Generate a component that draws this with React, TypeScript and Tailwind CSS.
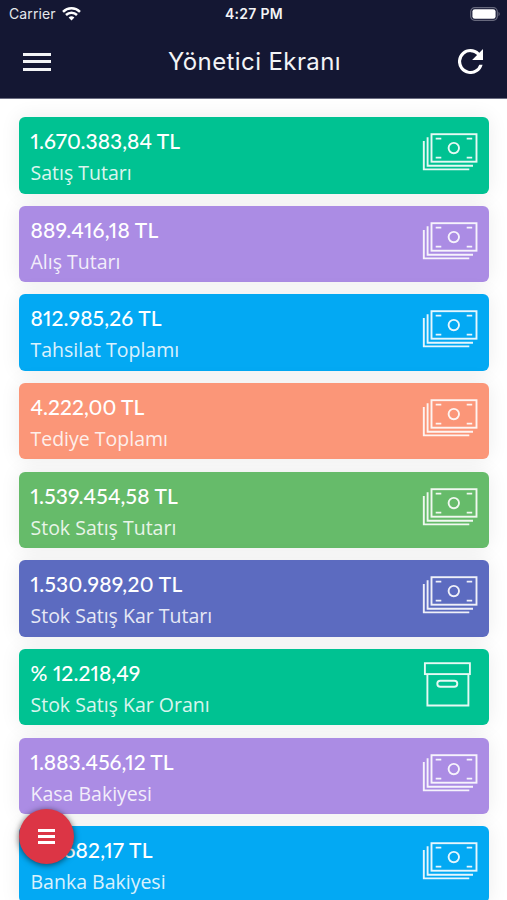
import React from 'react';

type Item = {
    value: string;
    label: string;
    color: string;
    tracking: string;
    icon?: 'money' | 'box';
};

const items: Item[] = [
    { value: '1.670.383,84 TL', label: 'Satış Tutarı', color: 'bg-[#00c292]', tracking: 'tracking-[0.03px]' },
    { value: '889.416,18 TL', label: 'Alış Tutarı', color: 'bg-[#ab8ce4]', tracking: 'tracking-[0.22px]' },
    { value: '812.985,26 TL', label: 'Tahsilat Toplamı', color: 'bg-[#03a9f3]', tracking: 'tracking-[0.15px]' },
    { value: '4.222,00 TL', label: 'Tediye Toplamı', color: 'bg-[#fb9678]', tracking: 'tracking-[0.03px]' },
    { value: '1.539.454,58 TL', label: 'Stok Satış Tutarı', color: 'bg-[#66bb6a]', tracking: 'tracking-[0.15px]' },
    { value: '1.530.989,20 TL', label: 'Stok Satış Kar Tutarı', color: 'bg-[#5c6bc0]', tracking: 'tracking-[0.27px]' },
    { value: '% 12.218,49', label: 'Stok Satış Kar Oranı', color: 'bg-[#00c292]', tracking: 'tracking-[0.08px]', icon: 'box' },
    { value: '1.883.456,12 TL', label: 'Kasa Bakiyesi', color: 'bg-[#ab8ce4]', tracking: 'tracking-[0px]' },
    { value: '119.682,17 TL', label: 'Banka Bakiyesi', color: 'bg-[#03a9f3]', tracking: 'tracking-[0.2px]' },
];

const MoneyIcon = () => (
    <svg className="h-12 w-14" viewBox="0 0 56 48" fill="none" stroke="currentColor" strokeWidth="1.9">
        <rect x="9.5" y="6.2" width="45" height="27.5" />
        <path d="M5.6 9.3V37.7H51" />
        <path d="M1.8 13v28.4h45.5" />
        <circle cx="31.8" cy="20.1" r="5.2" />
        <path d="M13.7 10.6h5.6M44.7 10.6h5.5M13.7 29.6h5.6M44.7 29.6h5.5" />
    </svg>
);

const BoxIcon = () => (
    <svg className="h-12 w-14" viewBox="0 0 56 48" fill="none" stroke="currentColor" strokeWidth="1.9">
        <rect x="2.9" y="3.2" width="45" height="10.9" />
        <path d="M5.4 14v31.5h41V14" />
        <rect x="15.3" y="20.8" width="20" height="6" rx="3" />
    </svg>
);

const Header = () => (
    <header className="h-[99px] border-b border-[#6c6e82] bg-[#141733] font-['Inter',sans-serif] text-white">
        <div className="grid h-[27px] grid-cols-3 items-center pl-[9px] pr-[7px] text-[14px]">
            <div className="flex items-center gap-1.5 text-gray-200">
                <span className="tracking-[0.1px]">Carrier</span>
                <svg className="h-[14px] w-[19px] text-white" viewBox="0 0 19 14" fill="none" stroke="currentColor" strokeWidth="2.5">
                    <path d="M1 4.8a12.2 12.2 0 0 1 17 0" />
                    <path d="M4 8a7.9 7.9 0 0 1 11 0" />
                    <path d="M6.6 10.6a4.1 4.1 0 0 1 5.8 0L9.5 13.6z" fill="currentColor" stroke="none" />
                </svg>
            </div>
            <span className="-ml-px text-center font-semibold tracking-[0.3px] text-gray-100">4:27 PM</span>
            <svg className="ml-auto h-[14px] w-[30px]" viewBox="0 0 30 14" fill="none">
                <rect x="0.7" y="0.7" width="26.6" height="12.6" rx="4" stroke="#67697d" strokeWidth="1.2" />
                <rect x="2.4" y="2.2" width="23.2" height="9.6" rx="2.4" fill="white" />
                <path d="M28.5 4.8c1.6.8 1.6 3.6 0 4.4z" fill="#67697d" />
            </svg>
        </div>
        <div className="flex h-[69px] items-center justify-between pl-[23px] pr-[24px]">
            <button className="flex w-7 flex-col gap-[4.5px]" aria-label="Menu">
                <span className="h-[3px] bg-gray-100" />
                <span className="h-[3px] bg-gray-100" />
                <span className="h-[3px] bg-gray-100" />
            </button>
            <h1 className="pt-px text-[24px] tracking-[0.4px] text-gray-100">Yönetici Ekranı</h1>
            <button aria-label="Refresh">
                <svg className="h-[25px] w-[25px]" viewBox="4 4 16 16" fill="currentColor">
                    <path d="M17.65 6.35A7.96 7.96 0 0 0 12 4a8 8 0 1 0 7.73 10h-2.08A6 6 0 1 1 12 6c1.66 0 3.14.69 4.22 1.78L13 11h7V4z" />
                </svg>
            </button>
        </div>
    </header>
);

const Card = ({ item }: { item: Item }) => (
    <div className={`flex h-[76.5px] shrink-0 justify-between rounded-[6px] pl-[11.5px] pr-[11px] text-white shadow-[0_0_20px_rgba(0,0,0,0.08)] ${item.color}`}>
        <div className="whitespace-nowrap pt-[9px]">
            <div className={`font-['Lato',sans-serif] text-[21px] font-medium leading-[30px] proportional-nums ${item.tracking}`}>{item.value}</div>
            <div className="mt-[3px] font-['Open_Sans',sans-serif] text-[19.5px] leading-[28px] opacity-85">{item.label}</div>
        </div>
        <div className="pt-[11px] opacity-90">{item.icon === 'box' ? <BoxIcon /> : <MoneyIcon />}</div>
    </div>
);

const App = () => {
    return (
        <div className="relative h-[900px] w-[507px] overflow-hidden bg-white">
            <Header />
            <main className="flex flex-col gap-[12.17px] pl-[19px] pr-[18px] pt-[18px]">
                {items.map((item) => (
                    <Card key={item.label} item={item} />
                ))}
            </main>
            <button
                className="absolute left-[19px] top-[808.5px] flex h-[55px] w-[55px] flex-col items-center justify-center gap-[3px] rounded-full bg-[#dc3545] pt-px shadow-[0_1px_6px_rgba(0,0,0,0.6)]"
                aria-label="Actions"
            >
                <span className="h-[3px] w-[17px] bg-white" />
                <span className="h-[3px] w-[17px] bg-white" />
                <span className="h-[3px] w-[17px] bg-white" />
            </button>
        </div>
    );
};

export default App;
